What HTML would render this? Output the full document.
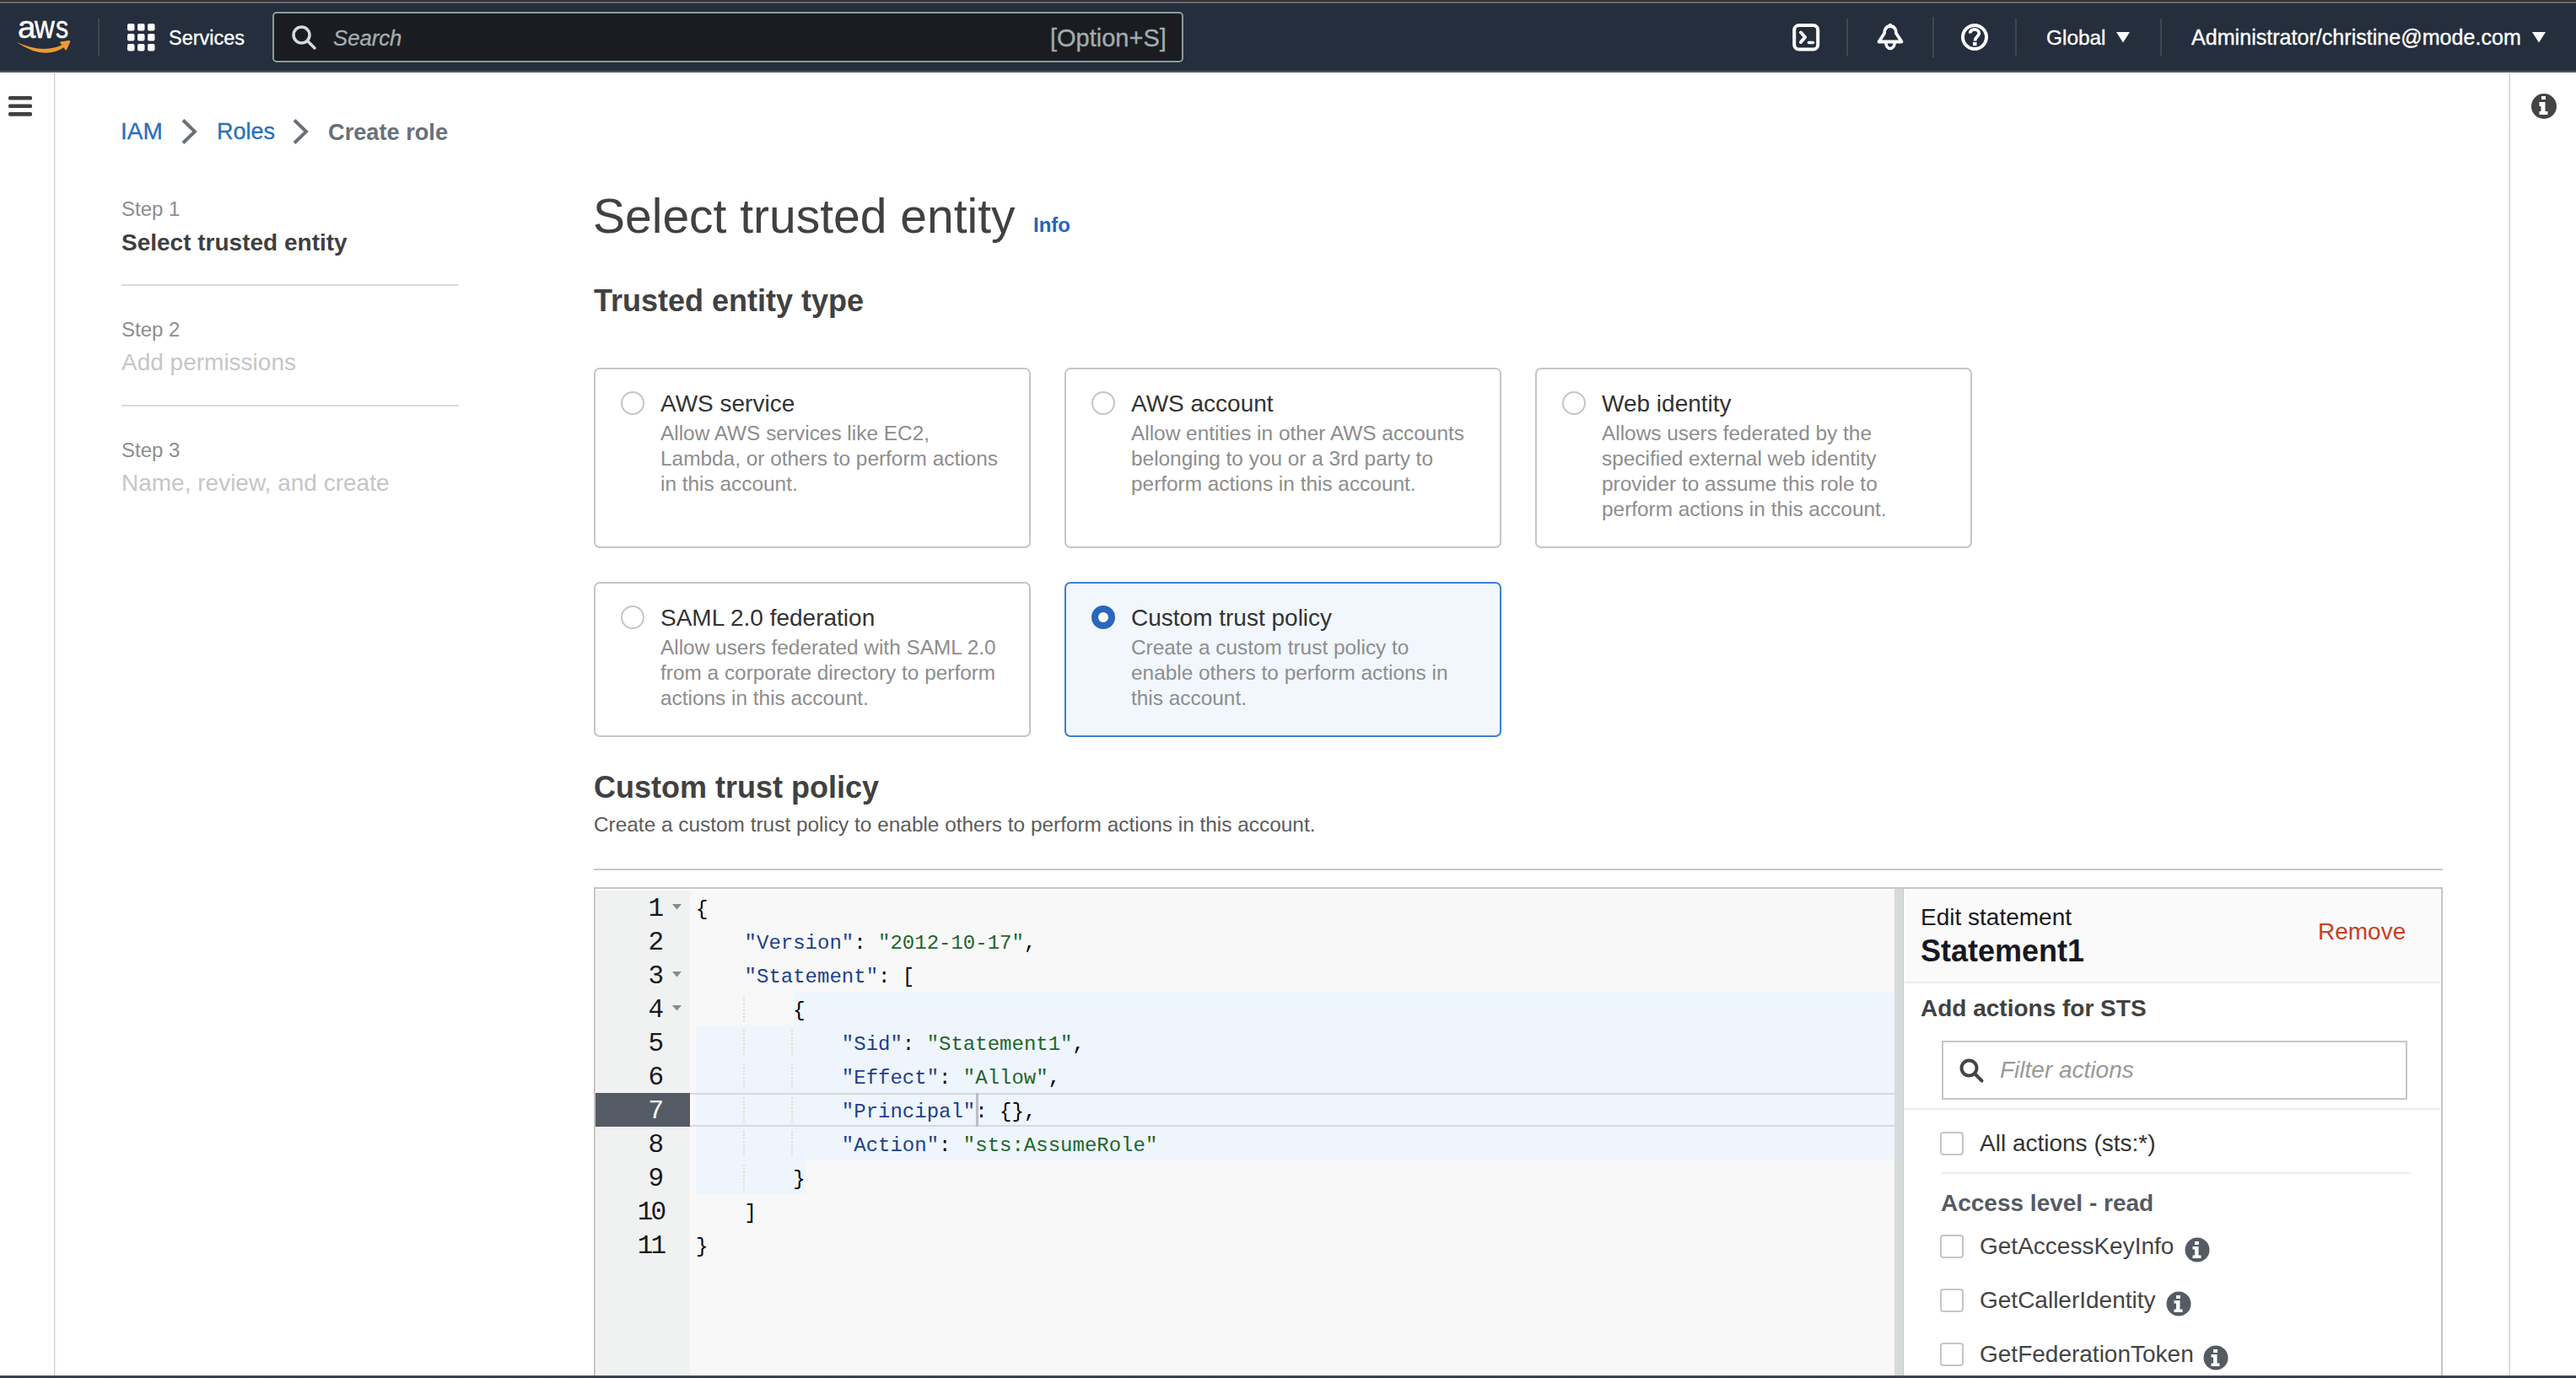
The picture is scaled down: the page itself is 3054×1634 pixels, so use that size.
<!DOCTYPE html>
<html><head><meta charset="utf-8">
<style>
*{box-sizing:border-box;margin:0;padding:0}
html,body{width:3054px;height:1634px;overflow:hidden;background:#fff;font-family:"Liberation Sans",sans-serif}
.a{position:absolute;white-space:pre}
#top0{position:absolute;left:0;top:0;width:3054px;height:2px;background:#363639}
#top1{position:absolute;left:0;top:2px;width:3054px;height:2px;background:#666769}
#nav{position:absolute;left:0;top:4px;width:3054px;height:80px;background:#252e3d}
#navb{position:absolute;left:0;top:84px;width:3054px;height:2px;background:#50565f}
.nt{color:#fff;line-height:1;-webkit-text-stroke-width:0.35px}
.md{-webkit-text-stroke-width:0.3px}
.sep{position:absolute;width:2px;background:#414750}
</style></head><body>
<div id="top0"></div><div id="top1"></div><div id="nav"></div><div id="navb"></div>

<!-- aws logo -->
<div class="a" style="left:21px;top:14px;font:37px/1 'Liberation Sans';color:#fff;transform:scaleX(1.04);transform-origin:0 0;-webkit-text-stroke:0.5px #fff">a</div>
<div class="a" style="left:41px;top:14px;font:37px/1 'Liberation Sans';color:#fff;transform:scaleX(0.89);transform-origin:0 0;-webkit-text-stroke:0.5px #fff">w</div>
<div class="a" style="left:65.5px;top:14px;font:37px/1 'Liberation Sans';color:#fff;transform:scaleX(0.82);transform-origin:0 0;-webkit-text-stroke:0.5px #fff">s</div>
<svg class="a" style="left:0;top:0" width="100" height="70" viewBox="0 0 100 70"><path d="M19.4 49.8 Q52 72.4 76.5 55.8 L75.5 52.3 Q52 64.8 19.4 49.8 Z" fill="#f09a32"/><path d="M71.5 50.8 L82 49.2 L77.6 59" stroke="#f09a32" stroke-width="2.6" fill="#f09a32" stroke-linejoin="round"/></svg>
<div class="sep" style="left:116px;top:22px;height:44px"></div>
<!-- grid icon -->
<svg class="a" style="left:151px;top:28px" width="34" height="33" viewBox="0 0 34 33">
<g fill="#fff">
<rect x="0" y="0" width="8.5" height="8.5" rx="2"/><rect x="12" y="0" width="8.5" height="8.5" rx="2"/><rect x="24" y="0" width="8.5" height="8.5" rx="2"/>
<rect x="0" y="12" width="8.5" height="8.5" rx="2"/><rect x="12" y="12" width="8.5" height="8.5" rx="2"/><rect x="24" y="12" width="8.5" height="8.5" rx="2"/>
<rect x="0" y="24" width="8.5" height="8.5" rx="2"/><rect x="12" y="24" width="8.5" height="8.5" rx="2"/><rect x="24" y="24" width="8.5" height="8.5" rx="2"/>
</g></svg>
<div class="a nt" style="left:200px;top:34px;font-size:23.5px">Services</div>
<!-- search -->
<div class="a" style="left:323px;top:14px;width:1080px;height:60px;background:#1a1c21;border:2px solid #8d9a9b;border-radius:5px"></div>
<svg class="a" style="left:345px;top:29px" width="32" height="32" viewBox="0 0 32 32"><circle cx="12.5" cy="12.5" r="9.5" stroke="#d5dbdb" stroke-width="3.5" fill="none"/><path d="M19.5 19.5 L28 28" stroke="#d5dbdb" stroke-width="3.5" stroke-linecap="round"/></svg>
<div class="a nt" style="left:395px;top:33px;font-size:25.7px;font-style:italic;color:#a1adad">Search</div>
<div class="a nt" style="left:1245px;top:31px;font-size:29px;color:#a1adad">[Option+S]</div>

<!-- right nav icons -->
<svg class="a" style="left:2124px;top:27px" width="34" height="34" viewBox="0 0 34 34"><rect x="3.2" y="3" width="28" height="28.5" rx="5.5" stroke="#fff" stroke-width="4" fill="none"/><path d="M11 11.5 L16 17 L11 23" stroke="#fff" stroke-width="4" fill="none" stroke-linecap="round" stroke-linejoin="round"/><path d="M20.5 23.5 L25.5 23.5" stroke="#fff" stroke-width="3.6" stroke-linecap="round"/></svg>
<div class="sep" style="left:2189px;top:22px;height:44px"></div>
<svg class="a" style="left:2224px;top:27px" width="34" height="34" viewBox="0 0 34 34"><path d="M17 4 C 12.5 4 10 7.5 10 12.5 L 3.5 22.5 L 30.5 22.5 L 24 12.5 C 24 7.5 21.5 4 17 4 Z" stroke="#fff" stroke-width="3.8" fill="none" stroke-linejoin="round"/><path d="M11.8 23.5 A5.2 7 0 0 0 22.2 23.5" stroke="#fff" stroke-width="3.6" fill="none"/><circle cx="17" cy="3" r="2.2" fill="#fff"/></svg>
<div class="sep" style="left:2291px;top:20px;height:48px"></div>
<svg class="a" style="left:2324px;top:27px" width="34" height="34" viewBox="0 0 34 34"><circle cx="17" cy="17" r="14" stroke="#fff" stroke-width="4" fill="none"/><path d="M11.8 12.5 C 11.8 9.5 14 7.8 17 7.8 C 20 7.8 22.3 9.8 22.3 12.6 C 22.3 16 17.5 16.5 17.5 21.5" stroke="#fff" stroke-width="3.8" fill="none" stroke-linecap="butt"/><rect x="15" y="23" width="4.5" height="4.2" fill="#fff"/></svg>
<div class="sep" style="left:2389px;top:22px;height:44px"></div>
<div class="a nt" style="left:2426px;top:33px;font-size:24.4px">Global</div>
<svg class="a" style="left:2509px;top:38px" width="16" height="13" viewBox="0 0 16 13"><path d="M0 0 L16 0 L8 12.5 Z" fill="#fff"/></svg>
<div class="sep" style="left:2561px;top:22px;height:44px"></div>
<div class="a nt" style="left:2598px;top:32px;font-size:25.1px">Administrator/christine@mode.com</div>
<svg class="a" style="left:3002px;top:38px" width="16" height="13" viewBox="0 0 16 13"><path d="M0 0 L16 0 L8 12.5 Z" fill="#fff"/></svg>

<!-- side lines -->
<div class="a" style="left:64px;top:87px;width:1px;height:1547px;background:#c8cccf"></div>
<div class="a" style="left:65px;top:87px;width:2px;height:1547px;background:linear-gradient(90deg,#eef0f0,#fff)"></div>
<div class="a" style="left:2975px;top:87px;width:1px;height:1547px;background:#c8cccf"></div>
<div class="a" style="left:2972px;top:87px;width:3px;height:1547px;background:linear-gradient(90deg,#fff,#eef0f0)"></div>
<!-- hamburger -->
<svg class="a" style="left:0;top:100px" width="50" height="50" viewBox="0 0 50 50"><g fill="#3f3f3f"><rect x="10" y="14" width="28" height="4.6" rx="1.6"/><rect x="10" y="23.6" width="28" height="4.4" rx="1.6"/><rect x="10" y="33.1" width="28" height="4.6" rx="1.6"/></g></svg>
<!-- right info -->
<svg class="a" style="left:3000px;top:110px" width="32" height="32" viewBox="0 0 32 32"><circle cx="16" cy="16" r="15" fill="#444"/><rect x="13" y="4" width="5" height="4" fill="#fff"/><path d="M10.5 11 H17.5 V22 H20.5 V26 H10.5 V22 H12.5 V16 H10.5 Z" fill="#fff"/></svg>


<!-- breadcrumb -->
<div class="a md" style="left:143px;top:142px;font-size:28px;line-height:1;color:#2a6fbd">IAM</div>
<svg class="a" style="left:212px;top:140px" width="26" height="32" viewBox="0 0 26 32"><path d="M5 2.5 L19 16 L5 29.5" stroke="#687078" stroke-width="3.9" fill="none"/></svg>
<div class="a md" style="left:257px;top:143px;font-size:27px;line-height:1;color:#2a6fbd">Roles</div>
<svg class="a" style="left:344px;top:140px" width="26" height="32" viewBox="0 0 26 32"><path d="M5 2.5 L19 16 L5 29.5" stroke="#687078" stroke-width="3.9" fill="none"/></svg>
<div class="a" style="left:389px;top:143px;font-size:27.2px;line-height:1;font-weight:bold;color:#687078">Create role</div>

<!-- steps -->
<div class="a" style="left:144px;top:236px;font-size:24px;line-height:1;color:#8d8d8d">Step 1</div>
<div class="a" style="left:144px;top:274px;font-size:28px;line-height:1;font-weight:bold;color:#3f3f3f">Select trusted entity</div>
<div class="a" style="left:144px;top:337px;width:400px;height:2px;background:#dadada"></div>
<div class="a" style="left:144px;top:379px;font-size:24px;line-height:1;color:#8d8d8d">Step 2</div>
<div class="a" style="left:144px;top:416px;font-size:28px;line-height:1;color:#c6c6c6">Add permissions</div>
<div class="a" style="left:144px;top:480px;width:400px;height:2px;background:#dadada"></div>
<div class="a" style="left:144px;top:522px;font-size:24px;line-height:1;color:#8d8d8d">Step 3</div>
<div class="a" style="left:144px;top:559px;font-size:28px;line-height:1;color:#c6c6c6">Name, review, and create</div>

<!-- title -->
<div class="a" style="left:703px;top:228px;font-size:57px;line-height:1;color:#414141">Select trusted entity</div>
<div class="a" style="left:1225px;top:255px;font-size:24px;line-height:1;font-weight:bold;color:#1f66c0">Info</div>
<div class="a" style="left:704px;top:339px;font-size:36px;line-height:1;font-weight:bold;color:#414141">Trusted entity type</div>


<!-- tiles -->
<div class="a" style="left:704px;top:436px;width:518px;height:214px;border:2px solid #c6c6c6;border-radius:7px;background:#fff"></div>
<div class="a" style="left:736px;top:464px;width:28px;height:28px;border-radius:50%;border:2px solid #c6c6c6;background:#fff"></div>
<div class="a" style="left:783px;top:465px;font-size:28px;line-height:1;color:#333">AWS service</div>
<div class="a" style="left:783px;top:499px;font-size:24.4px;line-height:30px;color:#8d8d8d">Allow AWS services like EC2,
Lambda, or others to perform actions
in this account.</div>
<div class="a" style="left:1262px;top:436px;width:518px;height:214px;border:2px solid #c6c6c6;border-radius:7px;background:#fff"></div>
<div class="a" style="left:1294px;top:464px;width:28px;height:28px;border-radius:50%;border:2px solid #c6c6c6;background:#fff"></div>
<div class="a" style="left:1341px;top:465px;font-size:28px;line-height:1;color:#333">AWS account</div>
<div class="a" style="left:1341px;top:499px;font-size:24.4px;line-height:30px;color:#8d8d8d">Allow entities in other AWS accounts
belonging to you or a 3rd party to
perform actions in this account.</div>
<div class="a" style="left:1820px;top:436px;width:518px;height:214px;border:2px solid #c6c6c6;border-radius:7px;background:#fff"></div>
<div class="a" style="left:1852px;top:464px;width:28px;height:28px;border-radius:50%;border:2px solid #c6c6c6;background:#fff"></div>
<div class="a" style="left:1899px;top:465px;font-size:28px;line-height:1;color:#333">Web identity</div>
<div class="a" style="left:1899px;top:499px;font-size:24.4px;line-height:30px;color:#8d8d8d">Allows users federated by the
specified external web identity
provider to assume this role to
perform actions in this account.</div>
<div class="a" style="left:704px;top:690px;width:518px;height:184px;border:2px solid #c6c6c6;border-radius:7px;background:#fff"></div>
<div class="a" style="left:736px;top:718px;width:28px;height:28px;border-radius:50%;border:2px solid #c6c6c6;background:#fff"></div>
<div class="a" style="left:783px;top:719px;font-size:28px;line-height:1;color:#333">SAML 2.0 federation</div>
<div class="a" style="left:783px;top:753px;font-size:24.4px;line-height:30px;color:#8d8d8d">Allow users federated with SAML 2.0
from a corporate directory to perform
actions in this account.</div>
<div class="a" style="left:1262px;top:690px;width:518px;height:184px;border:2px solid #3b7fd6;border-radius:7px;background:#f1f7fd"></div>
<div class="a" style="left:1294px;top:718px;width:28px;height:28px;border-radius:50%;border:8px solid #2a66bc;background:#fff"></div>
<div class="a" style="left:1341px;top:719px;font-size:28px;line-height:1;color:#333">Custom trust policy</div>
<div class="a" style="left:1341px;top:753px;font-size:24.4px;line-height:30px;color:#8d8d8d">Create a custom trust policy to
enable others to perform actions in
this account.</div>


<!-- custom trust policy section -->
<div class="a" style="left:704px;top:916px;font-size:36px;line-height:1;font-weight:bold;color:#414141">Custom trust policy</div>
<div class="a" style="left:704px;top:966px;font-size:24.4px;line-height:1;color:#5c5c5c">Create a custom trust policy to enable others to perform actions in this account.</div>
<div class="a" style="left:704px;top:1030px;width:2192px;height:2px;background:#c8c8c8"></div>

<!-- editor -->
<div class="a" style="left:704px;top:1052px;width:2192px;height:600px;border:2px solid #c6c6c6;background:#fff"></div>
<div class="a" style="left:706px;top:1056px;width:1540px;height:600px;background:#f8f8f8"></div>
<div class="a" style="left:707px;top:1056px;width:111px;height:600px;background:#f0f1f1"></div>
<div class="a" style="left:706px;top:1296px;width:112px;height:40px;background:#545b64"></div>
<div class="a" style="left:941px;top:1176px;width:1305px;height:40px;background:#eef5fd;border-top-left-radius:5px"></div>
<div class="a" style="left:825px;top:1216px;width:1421px;height:160px;background:#eef5fd;border-top-left-radius:5px"></div>
<div class="a" style="left:825px;top:1376px;width:130px;height:40px;background:#eef5fd;border-bottom-left-radius:5px;border-bottom-right-radius:5px"></div>
<div class="a" style="left:818px;top:1296px;width:1428px;height:2px;background:#d6dada"></div>
<div class="a" style="left:818px;top:1334px;width:1428px;height:2px;background:#d6dada"></div>
<div class="a" style="left:881px;top:1181px;width:2px;height:30px;background:repeating-linear-gradient(#e3ddcb 0 2px,transparent 2px 4px)"></div>
<div class="a" style="left:881px;top:1221px;width:2px;height:30px;background:repeating-linear-gradient(#e3ddcb 0 2px,transparent 2px 4px)"></div>
<div class="a" style="left:881px;top:1261px;width:2px;height:30px;background:repeating-linear-gradient(#e3ddcb 0 2px,transparent 2px 4px)"></div>
<div class="a" style="left:881px;top:1301px;width:2px;height:30px;background:repeating-linear-gradient(#e3ddcb 0 2px,transparent 2px 4px)"></div>
<div class="a" style="left:881px;top:1341px;width:2px;height:30px;background:repeating-linear-gradient(#e3ddcb 0 2px,transparent 2px 4px)"></div>
<div class="a" style="left:881px;top:1381px;width:2px;height:30px;background:repeating-linear-gradient(#e3ddcb 0 2px,transparent 2px 4px)"></div>
<div class="a" style="left:938px;top:1221px;width:2px;height:30px;background:repeating-linear-gradient(#e3ddcb 0 2px,transparent 2px 4px)"></div>
<div class="a" style="left:938px;top:1261px;width:2px;height:30px;background:repeating-linear-gradient(#e3ddcb 0 2px,transparent 2px 4px)"></div>
<div class="a" style="left:938px;top:1301px;width:2px;height:30px;background:repeating-linear-gradient(#e3ddcb 0 2px,transparent 2px 4px)"></div>
<div class="a" style="left:938px;top:1341px;width:2px;height:30px;background:repeating-linear-gradient(#e3ddcb 0 2px,transparent 2px 4px)"></div>
<div class="a gn" style="left:696px;top:1058px;width:91px;height:40px;text-align:right;font-family:'Liberation Mono',monospace;font-size:31px;line-height:40px;color:#16191f">1</div>
<div class="a gn" style="left:696px;top:1098px;width:91px;height:40px;text-align:right;font-family:'Liberation Mono',monospace;font-size:31px;line-height:40px;color:#16191f">2</div>
<div class="a gn" style="left:696px;top:1138px;width:91px;height:40px;text-align:right;font-family:'Liberation Mono',monospace;font-size:31px;line-height:40px;color:#16191f">3</div>
<div class="a gn" style="left:696px;top:1178px;width:91px;height:40px;text-align:right;font-family:'Liberation Mono',monospace;font-size:31px;line-height:40px;color:#16191f">4</div>
<div class="a gn" style="left:696px;top:1218px;width:91px;height:40px;text-align:right;font-family:'Liberation Mono',monospace;font-size:31px;line-height:40px;color:#16191f">5</div>
<div class="a gn" style="left:696px;top:1258px;width:91px;height:40px;text-align:right;font-family:'Liberation Mono',monospace;font-size:31px;line-height:40px;color:#16191f">6</div>
<div class="a gn" style="left:696px;top:1298px;width:91px;height:40px;text-align:right;font-family:'Liberation Mono',monospace;font-size:31px;line-height:40px;color:#fff">7</div>
<div class="a gn" style="left:696px;top:1338px;width:91px;height:40px;text-align:right;font-family:'Liberation Mono',monospace;font-size:31px;line-height:40px;color:#16191f">8</div>
<div class="a gn" style="left:696px;top:1378px;width:91px;height:40px;text-align:right;font-family:'Liberation Mono',monospace;font-size:31px;line-height:40px;color:#16191f">9</div>
<div class="a gn" style="left:696px;top:1418px;width:91px;height:40px;text-align:right;font-family:'Liberation Mono',monospace;font-size:31px;line-height:40px;color:#16191f;letter-spacing:-3px">10</div>
<div class="a gn" style="left:696px;top:1458px;width:91px;height:40px;text-align:right;font-family:'Liberation Mono',monospace;font-size:31px;line-height:40px;color:#16191f;letter-spacing:-3px">11</div>
<svg class="a" style="left:797px;top:1072px" width="11" height="7" viewBox="0 0 11 7"><path d="M0 0 H11 L5.5 6.5 Z" fill="#8a8a8a"/></svg>
<svg class="a" style="left:797px;top:1152px" width="11" height="7" viewBox="0 0 11 7"><path d="M0 0 H11 L5.5 6.5 Z" fill="#8a8a8a"/></svg>
<svg class="a" style="left:797px;top:1192px" width="11" height="7" viewBox="0 0 11 7"><path d="M0 0 H11 L5.5 6.5 Z" fill="#8a8a8a"/></svg>
<div class="a" style="left:825px;top:1059px;font-family:'Liberation Mono',monospace;font-size:24px;line-height:40px;color:#000">{</div>
<div class="a" style="left:825px;top:1099px;font-family:'Liberation Mono',monospace;font-size:24px;line-height:40px;color:#000">    <span style="color:#1e3f8c">"Version"</span>: <span style="color:#23652a">"2012-10-17"</span>,</div>
<div class="a" style="left:825px;top:1139px;font-family:'Liberation Mono',monospace;font-size:24px;line-height:40px;color:#000">    <span style="color:#1e3f8c">"Statement"</span>: [</div>
<div class="a" style="left:825px;top:1179px;font-family:'Liberation Mono',monospace;font-size:24px;line-height:40px;color:#000">        {</div>
<div class="a" style="left:825px;top:1219px;font-family:'Liberation Mono',monospace;font-size:24px;line-height:40px;color:#000">            <span style="color:#1e3f8c">"Sid"</span>: <span style="color:#23652a">"Statement1"</span>,</div>
<div class="a" style="left:825px;top:1259px;font-family:'Liberation Mono',monospace;font-size:24px;line-height:40px;color:#000">            <span style="color:#1e3f8c">"Effect"</span>: <span style="color:#23652a">"Allow"</span>,</div>
<div class="a" style="left:825px;top:1299px;font-family:'Liberation Mono',monospace;font-size:24px;line-height:40px;color:#000">            <span style="color:#1e3f8c">"Principal"</span>: {},</div>
<div class="a" style="left:825px;top:1339px;font-family:'Liberation Mono',monospace;font-size:24px;line-height:40px;color:#000">            <span style="color:#1e3f8c">"Action"</span>: <span style="color:#23652a">"sts:AssumeRole"</span></div>
<div class="a" style="left:825px;top:1379px;font-family:'Liberation Mono',monospace;font-size:24px;line-height:40px;color:#000">        }</div>
<div class="a" style="left:825px;top:1419px;font-family:'Liberation Mono',monospace;font-size:24px;line-height:40px;color:#000">    ]</div>
<div class="a" style="left:825px;top:1459px;font-family:'Liberation Mono',monospace;font-size:24px;line-height:40px;color:#000">}</div>
<div class="a" style="left:1157px;top:1296px;width:3px;height:40px;background:#b9bec6"></div>


<!-- splitter + right panel -->
<div class="a" style="left:2246px;top:1054px;width:10px;height:600px;background:#d5dbdb"></div><div class="a" style="left:2256px;top:1054px;width:2px;height:600px;background:#c8c8c8"></div>
<div class="a" style="left:2257px;top:1054px;width:636px;height:110px;background:#fafafa"></div>
<div class="a" style="left:2257px;top:1164px;width:636px;height:2px;background:#eaeded"></div>
<div class="a" style="left:2257px;top:1166px;width:636px;height:500px;background:#fff"></div>
<div class="a" style="left:2257px;top:1314px;width:636px;height:2px;background:#eaeded"></div>
<div class="a" style="left:2277px;top:1074px;font-size:28px;line-height:1;color:#16191f">Edit statement</div>
<div class="a" style="left:2277px;top:1110px;font-size:36px;line-height:1;font-weight:bold;color:#16191f">Statement1</div>
<div class="a" style="left:2748px;top:1091px;font-size:28px;line-height:1;color:#c8401e">Remove</div>
<div class="a" style="left:2277px;top:1182px;font-size:28px;line-height:1;font-weight:bold;color:#414141">Add actions for STS</div>
<div class="a" style="left:2302px;top:1234px;width:552px;height:70px;border:2px solid #c6c6c6;background:#fff"></div>
<svg class="a" style="left:2322px;top:1254px" width="32" height="32" viewBox="0 0 32 32"><circle cx="12.5" cy="12.5" r="9" stroke="#444" stroke-width="4" fill="none"/><path d="M19 19 L27.5 27.5" stroke="#444" stroke-width="4" stroke-linecap="round"/></svg>
<div class="a" style="left:2371px;top:1255px;font-size:28px;line-height:1;font-style:italic;color:#999">Filter actions</div>
<div class="a" style="left:2300px;top:1342px;width:28px;height:28px;border:2px solid #c6c6c6;border-radius:4px;background:#fff"></div>
<div class="a" style="left:2347px;top:1342px;font-size:28px;line-height:1;color:#333">All actions (sts:*)</div>
<div class="a" style="left:2302px;top:1390px;width:556px;height:2px;background:#eaeded"></div>
<div class="a" style="left:2301px;top:1413px;font-size:28px;line-height:1;font-weight:bold;color:#545b64">Access level - read</div>
<div class="a" style="left:2300px;top:1464px;width:28px;height:28px;border:2px solid #c6c6c6;border-radius:4px;background:#fff"></div>
<div class="a" style="left:2347px;top:1464px;font-size:28px;line-height:1;color:#444">GetAccessKeyInfo</div>
<svg class="a" style="left:2590px;top:1467px" width="30" height="30" viewBox="0 0 30 30"><circle cx="15" cy="15" r="14.5" fill="#545b64"/><rect x="12" y="5" width="5" height="4" fill="#fff"/><path d="M9.5 11 H16.5 V21.5 H19.5 V25 H9.5 V21.5 H12 V14.5 H9.5 Z" fill="#fff"/></svg>
<div class="a" style="left:2300px;top:1528px;width:28px;height:28px;border:2px solid #c6c6c6;border-radius:4px;background:#fff"></div>
<div class="a" style="left:2347px;top:1528px;font-size:28px;line-height:1;color:#444">GetCallerIdentity</div>
<svg class="a" style="left:2568px;top:1531px" width="30" height="30" viewBox="0 0 30 30"><circle cx="15" cy="15" r="14.5" fill="#545b64"/><rect x="12" y="5" width="5" height="4" fill="#fff"/><path d="M9.5 11 H16.5 V21.5 H19.5 V25 H9.5 V21.5 H12 V14.5 H9.5 Z" fill="#fff"/></svg>
<div class="a" style="left:2300px;top:1592px;width:28px;height:28px;border:2px solid #c6c6c6;border-radius:4px;background:#fff"></div>
<div class="a" style="left:2347px;top:1592px;font-size:28px;line-height:1;color:#444">GetFederationToken</div>
<svg class="a" style="left:2612px;top:1595px" width="30" height="30" viewBox="0 0 30 30"><circle cx="15" cy="15" r="14.5" fill="#545b64"/><rect x="12" y="5" width="5" height="4" fill="#fff"/><path d="M9.5 11 H16.5 V21.5 H19.5 V25 H9.5 V21.5 H12 V14.5 H9.5 Z" fill="#fff"/></svg>

<!-- bottom band -->
<div class="a" style="left:0;top:1631px;width:3054px;height:3px;background:linear-gradient(#4d545e,#2a3340)"></div>
</body></html>
